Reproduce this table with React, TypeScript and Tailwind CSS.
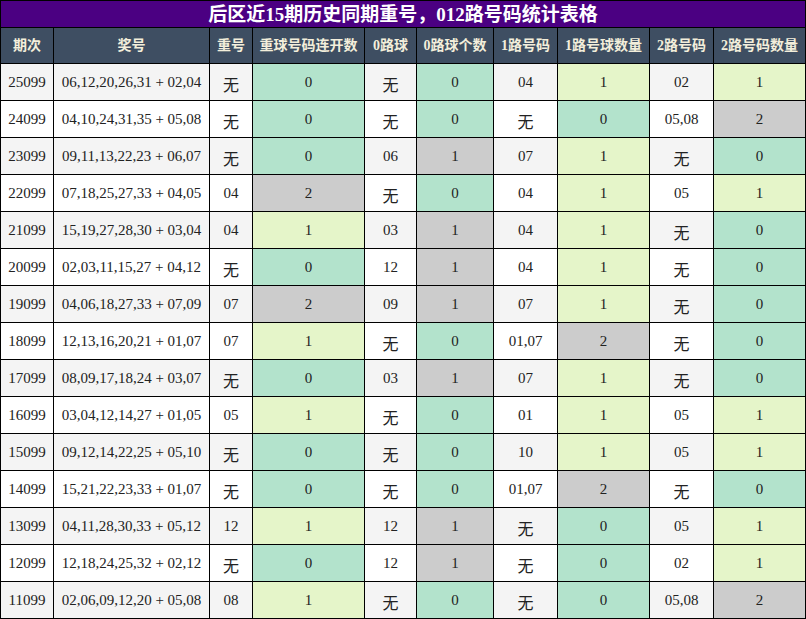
import React from "react";

type Row = [string, string, string, string, string, string, string, string, string, string];

const rows: Row[] = [
  ["25099", "06,12,20,26,31 + 02,04", "无", "0", "无", "0", "04", "1", "02", "1"],
  ["24099", "04,10,24,31,35 + 05,08", "无", "0", "无", "0", "无", "0", "05,08", "2"],
  ["23099", "09,11,13,22,23 + 06,07", "无", "0", "06", "1", "07", "1", "无", "0"],
  ["22099", "07,18,25,27,33 + 04,05", "04", "2", "无", "0", "04", "1", "05", "1"],
  ["21099", "15,19,27,28,30 + 03,04", "04", "1", "03", "1", "04", "1", "无", "0"],
  ["20099", "02,03,11,15,27 + 04,12", "无", "0", "12", "1", "04", "1", "无", "0"],
  ["19099", "04,06,18,27,33 + 07,09", "07", "2", "09", "1", "07", "1", "无", "0"],
  ["18099", "12,13,16,20,21 + 01,07", "07", "1", "无", "0", "01,07", "2", "无", "0"],
  ["17099", "08,09,17,18,24 + 03,07", "无", "0", "03", "1", "07", "1", "无", "0"],
  ["16099", "03,04,12,14,27 + 01,05", "05", "1", "无", "0", "01", "1", "05", "1"],
  ["15099", "09,12,14,22,25 + 05,10", "无", "0", "无", "0", "10", "1", "05", "1"],
  ["14099", "15,21,22,23,33 + 01,07", "无", "0", "无", "0", "01,07", "2", "无", "0"],
  ["13099", "04,11,28,30,33 + 05,12", "12", "1", "12", "1", "无", "0", "05", "1"],
  ["12099", "12,18,24,25,32 + 02,12", "无", "0", "12", "1", "无", "0", "02", "1"],
  ["11099", "02,06,09,12,20 + 05,08", "08", "1", "无", "0", "无", "0", "05,08", "2"],
];

const headers = ["期次", "奖号", "重号", "重球号码连开数", "0路球", "0路球个数", "1路号码", "1路号球数量", "2路号码", "2路号码数量"];

const widths = ["w-[53px]", "w-[156px]", "w-[43px]", "w-[112px]", "w-[52px]", "w-[77px]", "w-[64px]", "w-[92px]", "w-[64px]", "w-[92px]"];

function countBg(col: number, v: string): string {
  if (v === "0") return "bg-[#b3e3cc]";
  if (v === "2") return "bg-[#cccccc]";
  if (col === 5) return "bg-[#cccccc]";
  return "bg-[#e5f5c9]";
}

export default function App() {
  return (
    <div
      className="w-[806px] h-[619px] bg-white border-t border-l border-black text-[#222]"
      style={{ fontFamily: '"Liberation Serif", "Noto Sans CJK SC", serif' }}
    >
      <div className="h-[27px] bg-[#4b0082] border-r border-b border-black flex items-center justify-center text-white text-[19px] font-bold leading-none">
        后区近15期历史同期重号，012路号码统计表格
      </div>
      <div className="flex h-[36px] bg-[#3e4e62]">
        {headers.map((h, i) => (
          <div
            key={i}
            className={`${widths[i]} shrink-0 border-r border-b border-black flex items-center justify-center text-[14px] font-bold text-[#f3eedb] whitespace-nowrap`}
          >
            {h}
          </div>
        ))}
      </div>
      {rows.map((r, ri) => {
        const rowBg = ri % 2 === 0 ? "bg-[#f4f4f4]" : "bg-white";
        return (
          <div key={ri} className={`flex h-[37px] ${rowBg}`}>
            {r.map((c, ci) => {
              const isCount = ci === 3 || ci === 5 || ci === 7 || ci === 9;
              const bg = isCount ? countBg(ci, c) : "";
              const size = c === "无" ? "text-[16px] pt-[7px]" : "text-[15px]";
              return (
                <div
                  key={ci}
                  className={`${widths[ci]} ${bg} ${size} shrink-0 border-r border-b border-black flex items-center justify-center whitespace-nowrap`}
                >
                  {c}
                </div>
              );
            })}
          </div>
        );
      })}
    </div>
  );
}
